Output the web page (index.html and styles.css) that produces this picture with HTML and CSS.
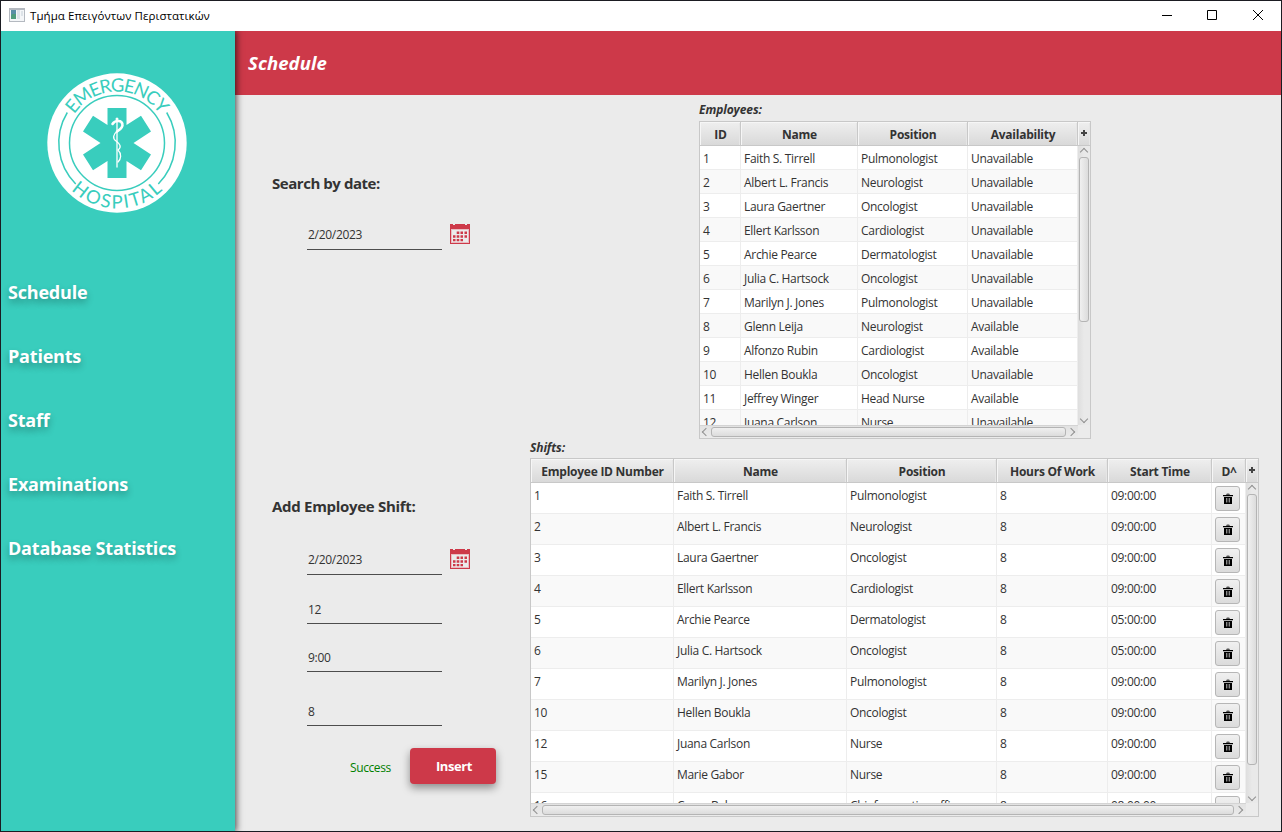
FILE: index.html
```html
<!DOCTYPE html>
<html lang="el">
<head>
<meta charset="utf-8">
<title>Τμήμα Επειγόντων Περιστατικών</title>
<link rel="stylesheet" href="styles.css">
</head>
<body>
<svg class="defs" aria-hidden="true">
  <symbol id="calendar" viewBox="0 0 20 20">
    <path fill="#cd3949" d="M0 0h3v1h2V0h10v1h2V0h3v20H0z"/>
    <path fill="#e9bcc2" d="M1 5h18v14H1z"/>
    <path fill="#ebebeb" d="M2 6h16v12H2z"/>
    <path fill="#cd3949" d="M6.700 7.500h2.600V10H6.700zM10.500 7.500H13V10h-2.500zM14.500 7.500H17V10h-2.500zM3 11.200h2.500v2.500H3zM6.700 11.200h2.600v2.500H6.700zM10.500 11.200H13v2.500h-2.500zM14.500 11.200H17v2.500h-2.500zM3 15h2.500v2.200H3zM6.700 15h2.600v2.200H6.700zM10.500 15H13v2.200h-2.500z"/>
  </symbol>
  <symbol id="trash" viewBox="0 0 10 12">
    <path fill="#555" d="M3 1.500L4 .5h2L7 1.500V3H3z"/>
    <path fill="#000" d="M0 2h10v1.300H0zM1 4h8v7H1z"/>
    <path fill="#8a8a8a" d="M3 5h1v4.500H3zM4.600 5h.8v4.500h-.8zM6 5h1v4.500H6z"/>
  </symbol>
</svg>
<div class="window">
  <header class="titlebar">
    <svg class="app-icon" width="16" height="14" viewBox="0 0 16 14"><path fill="#b4b9c0" d="M0 0h16v14H0z"/><path fill="#f4f6f8" d="M1 2h14v11H1z"/><path fill="#5a8fa6" d="M2 2h5v9H2z"/><path fill="#4f9c7c" d="M3 6h4v5H2V8z"/><path fill="#dde3e8" d="M8 2h3v9H8zM12 3h2v5h-2z"/></svg>
    <span class="title">Τμήμα Επειγόντων Περιστατικών</span>
    <svg class="controls" width="106" height="12" viewBox="0 0 106 12" fill="none" stroke="#000"><path d="M1 6.500h10M46.500 1.500h9v9h-9z"/><path d="M92 1l10 10M102 1L92 11"/></svg>
  </header>
  <div class="body">
    <aside class="sidebar">
      <svg class="logo" width="140" height="140" viewBox="-70 -70 140 140">
        <defs>
          <path id="arc-top" d="M-51.500 0A51.500 51.500 0 0 1 51.500 0"/>
          <path id="arc-bottom" d="M-65.500 0A65.500 65.500 0 0 0 65.500 0"/>
        </defs>
        <circle r="69.700" fill="#fff"/>
        <g fill="none" stroke="#39cdbd" stroke-width="1.500"><circle r="47.500"/><path d="M-49.700-30.500A58.500 58.500 0 0 0-41.300 41M49.700-30.500A58.500 58.500 0 0 1 41.300 41"/></g>
        <path fill="#39cdbd" d="M-9.500-35h19v17L24-27.300 34-11.500 16.500 0 34 11.500 24 27.300 9.500 18v17h-19V18L-24 27.300-34 11.500-16.500 0-34-11.500-24-27.300-9.500-18z"/>
        <g fill="none" stroke="#fff" stroke-linecap="round"><path stroke-width="1.300" d="M0-21V24"/><path stroke-width="2.600" d="M-4.500-19C-2-23 5-23 5.500-18.500C6-15 2-13 0-11.500"/><path stroke-width="1.300" d="M0-11.500C-4-9-4.500-4-1-2C3 1 5 4 1 7M1 7C5 11 4 16 1 19"/></g>
        <circle cx="0" cy="-24" r="1.500" fill="#fff"/>
        <text class="logo-text"><textPath href="#arc-top" startOffset="50%" text-anchor="middle" textLength="101">EMERGENCY</textPath></text>
        <text class="logo-text"><textPath href="#arc-bottom" startOffset="50%" text-anchor="middle" textLength="101">HOSPITAL</textPath></text>
      </svg>
      <nav class="nav"><a>Schedule</a><a>Patients</a><a>Staff</a><a>Examinations</a><a>Database Statistics</a></nav>
    </aside>
    <div class="page">
      <div class="page-head">Schedule</div>
      <main class="content">
        <section class="forms">
          <h2 class="search-title">Search by date:</h2>
          <div class="field f-search"><span class="input">2/20/2023</span><svg class="cal"><use href="#calendar"/></svg></div>
          <h2 class="add-title">Add Employee Shift:</h2>
          <div class="field f-date"><span class="input">2/20/2023</span><svg class="cal"><use href="#calendar"/></svg></div>
          <div class="field f-id"><span class="input">12</span></div>
          <div class="field f-time"><span class="input">9:00</span></div>
          <div class="field f-hours"><span class="input">8</span></div>
          <div class="actions"><span class="success">Success</span><button class="insert">Insert</button></div>
        </section>
        <section class="tables">
          <h3 class="label label-emp">Employees:</h3>
          <div class="table employees">
            <div class="view"><div class="row head"><b>ID</b><b>Name</b><b>Position</b><b>Availability</b></div><div class="rows" id="employees"></div></div>
            <div class="side"><div class="plus"></div><div class="vbar"><i class="arr up"></i><i class="thumb"></i><i class="arr down"></i></div></div>
            <div class="hbar"><i class="arr left"></i><i class="thumb"></i><i class="arr right"></i></div>
          </div>
          <h3 class="label label-shift">Shifts:</h3>
          <div class="table shifts">
            <div class="view"><div class="row head"><b>Employee ID Number</b><b>Name</b><b>Position</b><b>Hours Of Work</b><b>Start Time</b><b>D^</b></div><div class="rows" id="shifts"></div></div>
            <div class="side"><div class="plus"></div><div class="vbar"><i class="arr up"></i><i class="thumb"></i><i class="arr down"></i></div></div>
            <div class="hbar"><i class="arr left"></i><i class="thumb"></i><i class="arr right"></i></div>
          </div>
        </section>
      </main>
    </div>
  </div>
</div>
<script src="app.js"></script>
</body>
</html>
```
FILE: styles.css
```css
* { box-sizing: border-box; }
body { margin: 0; font: 12px "Open Sans", "Noto Sans", sans-serif; color: #333; }
h2, h3 { margin: 0; }
.defs { display: none; }
.window { width: 1282px; height: 832px; border: 1px solid #1b1c22; background: #ebebeb; overflow: hidden; }
.titlebar { height: 30px; background: #fff; display: flex; align-items: center; padding: 0 14px 0 8px; color: #000; }
.app-icon { margin-top: -2px; }
.title { margin: -2px 0 0 5px; font-size: 11.5px; letter-spacing: 0.06px; flex: 1; }
.controls { margin-top: -2px; }
.body { display: flex; height: 800px; overflow: hidden; }
.sidebar { width: 234px; background: #39cdbd; box-shadow: 0 0 7px 1px rgba(0,0,0,.75); position: relative; z-index: 1; flex: none; }
.logo { display: block; margin: 42px 0 0 46px; }
.logo-text { font: 400 18.5px Lato, sans-serif; fill: #39cdbd; }
.nav { display: flex; flex-direction: column; margin-top: 47px; padding-left: 7px; }
.nav a { height: 64px; line-height: 64px; font-size: 18px; font-weight: 700; color: #fff; letter-spacing: -0.2px; text-shadow: 0 4px 7px rgba(0,0,0,.3); }
.page { flex: 1; }
.page-head { height: 64px; line-height: 64px; padding-left: 13px; background: #cd3949; color: #fff; font-size: 18.5px; font-weight: 700; font-style: italic; letter-spacing: 0.1px; }
.content { display: flex; }
.forms { width: 295px; padding: 79px 0 0 37px; }
.forms h2 { font-size: 15px; line-height: 18px; height: 20px; white-space: nowrap; letter-spacing: -0.3px; }
.forms .search-title { letter-spacing: -0.45px; }
.field { display: flex; gap: 8px; padding-left: 35px; height: 28px; }
.input { width: 135px; border-bottom: 1px solid #4d4d4d; line-height: 26px; padding-left: 1px; letter-spacing: -0.3px; }
.f-id .input, .f-time .input, .f-hours .input { line-height: 28px; }
.cal { width: 20px; height: 20px; margin-top: 2px; }
.f-search { margin-top: 28px; }
.forms .add-title { margin-top: 247px; }
.f-date { margin-top: 30px; }
.f-id { margin-top: 21px; }
.f-time { margin-top: 20px; }
.f-hours { margin-top: 26px; }
.actions { display: flex; align-items: center; margin-top: 22px; padding-left: 78px; height: 36px; }
.success { width: 60px; color: #008000; letter-spacing: -0.4px; padding-top: 2px; }
.insert { width: 86px; height: 36px; border: 0; border-radius: 4px; background: #cd3949; color: #fff; font: 700 13px "Open Sans", sans-serif; letter-spacing: -0.4px; padding-left: 8px; box-shadow: 0 4px 9px rgba(0,0,0,.4); }
.tables { padding-top: 5px; }
.label { font-size: 12px; font-style: italic; font-weight: 700; letter-spacing: -0.1px; }
.label-emp { height: 21px; line-height: 20px; margin-left: 169px; }
.label-shift { height: 19px; line-height: 18px; }
.table { border: 1px solid #c8c8c8; display: grid; overflow: hidden; background: #ebebeb; }
.employees { width: 392px; height: 318px; margin-left: 169px; grid-template: 303px 13px / 378px 12px; --cols: 41px 117px 110px 110px; --rh: 24px; --hx: 355px; --vy: 165px; }
.shifts { width: 729px; height: 359px; grid-template: 344px 13px / 715px 12px; --cols: 143px 173px 150px 111px 104px 34px; --rh: 31px; --hx: 692px; --vy: 271px; }
.view { overflow: hidden; min-height: 0; }
.rows { background: #fff; }
.row { display: grid; grid-template: var(--rh) / var(--cols); height: var(--rh); }
.row > span { border-right: 1px solid #ededed; border-bottom: 1px solid #ededed; padding-left: 3px; line-height: 25px; white-space: nowrap; overflow: hidden; letter-spacing: -0.3px; }
.row:nth-child(even) > span { background: #f9f9f9; }
.row.head { height: 24px; grid-template-rows: 24px; }
.head b, .plus { background: linear-gradient(#efefef, #d9d9d9); border-right: 1px solid #c8c8c8; border-bottom: 1px solid #c8c8c8; box-shadow: inset 1px 1px #f6f6f6, inset -1px 0 #e6e6e6; }
.head b { height: 24px; text-align: center; line-height: 26px; padding-left: 1px; letter-spacing: -0.25px; white-space: nowrap; }
.plus { height: 24px; flex: none; border-right: 0; display: grid; place-items: center; padding-bottom: 1px; }
.plus::before { content: ""; width: 6px; height: 6px; background: linear-gradient(#444,#444) center/6px 2px no-repeat, linear-gradient(#444,#444) center/2px 6px no-repeat; }
.side { display: flex; flex-direction: column; }
.vbar { flex: 1; display: flex; flex-direction: column; align-items: center; background: linear-gradient(90deg,#dedede,#e9e9e9 50%); padding: 2px 0 2px; }
.hbar { border-top: 1px solid #d4d4d4; display: flex; align-items: center; background: linear-gradient(#e2e2e2,#ebebeb); padding: 0 4px 0 3px; }
.vbar .thumb { width: 10px; height: var(--vy); margin-top: 3px; background: linear-gradient(90deg,#f0f0f0,#dcdcdc); }
.hbar .thumb { height: 10px; width: var(--hx); margin-left: 2px; background: linear-gradient(#f0f0f0,#dcdcdc); }
.thumb { border: 1px solid #b4b4b4; border-radius: 3px; flex: none; }
.arr { width: 6px; height: 6px; flex: none; display: grid; place-items: center; }
.arr::before { content: ""; width: 5px; height: 5px; border: solid #909090; border-width: 1px 0 0 1px; flex: none; }
.up::before { transform: translateY(1px) rotate(45deg); }
.down { margin-top: auto; }
.down::before { transform: translateY(-1px) rotate(225deg); }
.left::before { transform: rotate(-45deg); }
.right { margin-left: 2px; }
.right::before { transform: rotate(135deg); }
.del { display: grid; place-items: center; width: 25px; height: 25px; margin-top: 3px; border: 1px solid #b6b6b6; border-radius: 3px; padding: 0; background: linear-gradient(#f0f0f0,#dbdbdb); }
.del svg { width: 10px; height: 12px; }
.row > .cell-del { padding-left: 3px; line-height: 0; }
```
FILE: app.js
```js
const staff = [
  ['1', 'Faith S. Tirrell', 'Pulmonologist', 'Unavailable'],
  ['2', 'Albert L. Francis', 'Neurologist', 'Unavailable'],
  ['3', 'Laura Gaertner', 'Oncologist', 'Unavailable'],
  ['4', 'Ellert Karlsson', 'Cardiologist', 'Unavailable'],
  ['5', 'Archie Pearce', 'Dermatologist', 'Unavailable'],
  ['6', 'Julia C. Hartsock', 'Oncologist', 'Unavailable'],
  ['7', 'Marilyn J. Jones', 'Pulmonologist', 'Unavailable'],
  ['8', 'Glenn Leija', 'Neurologist', 'Available'],
  ['9', 'Alfonzo Rubin', 'Cardiologist', 'Available'],
  ['10', 'Hellen Boukla', 'Oncologist', 'Unavailable'],
  ['11', 'Jeffrey Winger', 'Head Nurse', 'Available'],
  ['12', 'Juana Carlson', 'Nurse', 'Unavailable']
];
const shifts = [
  ['1', 'Faith S. Tirrell', 'Pulmonologist', '8', '09:00:00'],
  ['2', 'Albert L. Francis', 'Neurologist', '8', '09:00:00'],
  ['3', 'Laura Gaertner', 'Oncologist', '8', '09:00:00'],
  ['4', 'Ellert Karlsson', 'Cardiologist', '8', '09:00:00'],
  ['5', 'Archie Pearce', 'Dermatologist', '8', '05:00:00'],
  ['6', 'Julia C. Hartsock', 'Oncologist', '8', '05:00:00'],
  ['7', 'Marilyn J. Jones', 'Pulmonologist', '8', '09:00:00'],
  ['10', 'Hellen Boukla', 'Oncologist', '8', '09:00:00'],
  ['12', 'Juana Carlson', 'Nurse', '8', '09:00:00'],
  ['15', 'Marie Gabor', 'Nurse', '8', '09:00:00'],
  ['16', 'Casey Baker', 'Chief executive officer', '8', '08:00:00']
];
const row = (cells, extra = '') =>
  '<div class="row">' + cells.map(c => `<span>${c}</span>`).join('') + extra + '</div>';
const del = '<span class="cell-del"><button class="del"><svg><use href="#trash"/></svg></button></span>';
document.getElementById('employees').innerHTML = staff.map(r => row(r)).join('');
document.getElementById('shifts').innerHTML = shifts.map(r => row(r, del)).join('');
```
